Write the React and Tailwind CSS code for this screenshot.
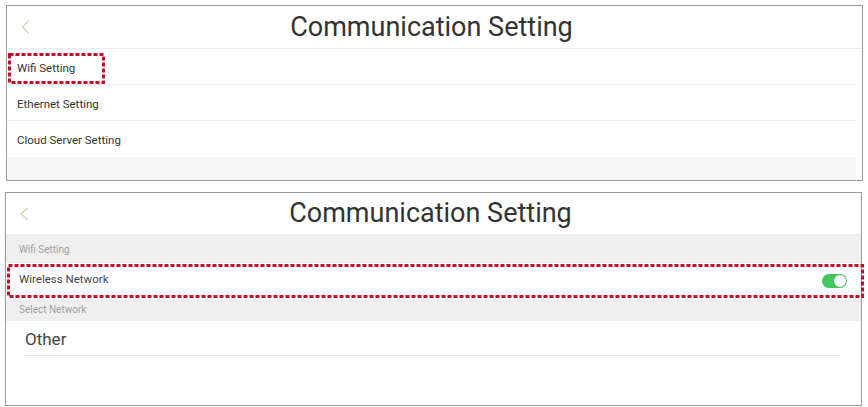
import React from "react";

const FONT = { fontFamily: "Roboto, 'Noto Sans', Arial, sans-serif" };

function Back() {
  return (
    <svg width="9" height="14" viewBox="0 0 9 14" className="shrink-0">
      <polyline points="7.5,1 1.5,7 7.5,13" fill="none" stroke="#d3d3b4" strokeWidth="1.3" />
    </svg>
  );
}

function Header({ h }) {
  return (
    <div className={`relative flex items-center justify-center border-b border-[#ececec] ${h}`}>
      <div className="absolute left-[14px] top-0 bottom-0 flex items-center">
        <Back />
      </div>
      <span className="text-[27px] text-[#333] leading-none mr-[6px]">Communication Setting</span>
    </div>
  );
}

function Toggle() {
  return (
    <div className="w-[25px] h-[14px] rounded-full bg-[#43c85f] flex items-center justify-end pr-[1px]">
      <div className="w-[12px] h-[12px] rounded-full bg-white shadow-[0_0_1px_rgba(0,0,0,0.3)]" />
    </div>
  );
}

// red dotted annotation frame
function Mark({ className, w, h }) {
  return (
    <svg className={`absolute ${className}`} width={w} height={h}>
      <rect x="1.5" y="1.5" width={w - 3} height={h - 3} fill="none" stroke="#c10f2b" strokeWidth="3" strokeDasharray="4 2" />
    </svg>
  );
}

export default function App() {
  const rows = ["Wifi Setting", "Ethernet Setting", "Cloud Server Setting"];
  return (
    <div className="w-[868px] h-[407px] bg-white relative" style={FONT}>
      {/* panel 1 */}
      <div className="absolute left-[6px] top-[5px] w-[857px] h-[176px] border border-[#9a9a9a] flex flex-col">
        <Header h="h-[43px]" />
        <div className="flex flex-col mr-[6px]">
          {rows.map((r, i) => (
            <div
              key={r}
              className={`h-[36px] flex items-center pl-[10px] pt-[4px] text-[11.5px] text-[#333] ${i < rows.length - 1 ? "border-b border-[#ededed]" : ""}`}
            >
              {r}
            </div>
          ))}
        </div>
        <div className="flex-1 bg-[#f7f7f7] mr-[6px]" />
        <Mark className="left-[1px] top-[47px]" w={97} h={31} />
      </div>

      {/* panel 2 */}
      <div className="absolute left-[5px] top-[192px] w-[857px] h-[214px] border border-[#9a9a9a] flex flex-col">
        <Header h="h-[42px]" />
        <div className="bg-[#efefef] flex flex-col">
          <div className="h-[28px] flex items-center pl-[13px] text-[10px] text-[#a0a0a0]">Wifi Setting</div>
          <div className="h-[36px] bg-white flex items-center justify-between pl-[13px] pr-[14px] text-[11.5px] text-[#444]">
            <span className="-mt-[3px]">Wireless Network</span>
            <Toggle />
          </div>
          <div className="h-[22px] flex items-center pl-[13px] pb-[2px] text-[10px] text-[#a0a0a0]">Select Network</div>
        </div>
        <div className="ml-[18px] mr-[21px] h-[35px] border-b border-[#e4e4e4] flex items-center pl-[1px] pt-[3px] text-[17px] text-[#444]">
          Other
        </div>
        <Mark className="left-[1px] top-[71px]" w={857} h={34} />
      </div>
    </div>
  );
}
